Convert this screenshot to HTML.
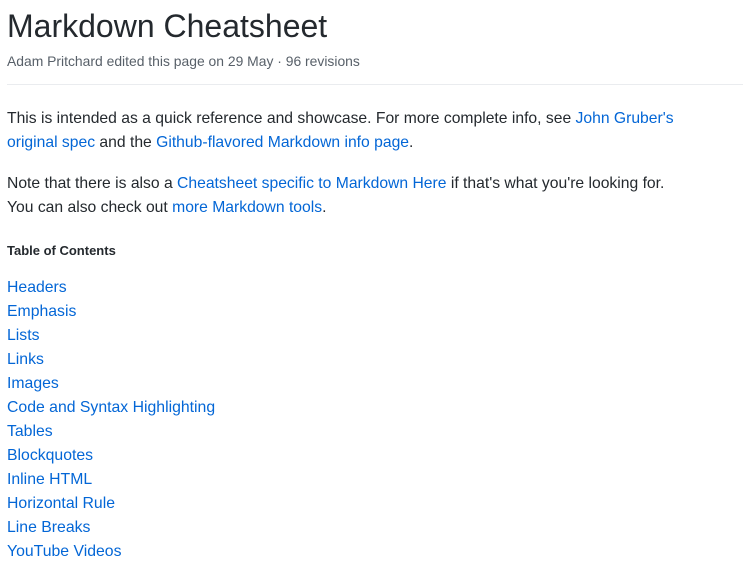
<!DOCTYPE html>
<html><head><meta charset="utf-8"><style>
body{margin:0;background:#fff;font-family:"Liberation Sans",sans-serif;color:#24292e;width:743px;height:567px;overflow:hidden}
.w{position:absolute;left:7px;top:0;width:736px}
h1{font-weight:400;font-size:32px;margin:0;position:absolute;top:8px;left:0;white-space:nowrap}
.sub{position:absolute;top:53px;left:0;font-size:13.9px;color:#586069}
.hr{position:absolute;top:84px;left:0;right:0;height:1px;background:#eaecef}
p{position:absolute;left:0;margin:0;font-size:15.7px;line-height:24px;white-space:nowrap}
a{color:#0366d6;text-decoration:none}
.toc{position:absolute;left:0;top:243px;font-size:13px;font-weight:bold}
ul{position:absolute;left:0;top:276px;margin:0;padding:0;list-style:none;font-size:15.8px;line-height:24px}
</style></head><body><div class="w">
<h1>Markdown Cheatsheet</h1>
<div class="sub">Adam Pritchard edited this page on 29 May · 96 revisions</div>
<div class="hr"></div>
<p style="top:107px">This is intended as a quick reference and showcase. For more complete info, see <a>John Gruber's</a><br><a>original spec</a> and the <a>Github-flavored Markdown info page</a>.</p>
<p style="top:172px">Note that there is also a <a>Cheatsheet specific to Markdown Here</a> if that's what you're looking for.<br>You can also check out <a>more Markdown tools</a>.</p>
<div class="toc">Table of Contents</div>
<ul><li><a>Headers</a></li><li><a>Emphasis</a></li><li><a>Lists</a></li><li><a>Links</a></li><li><a>Images</a></li><li><a>Code and Syntax Highlighting</a></li><li><a>Tables</a></li><li><a>Blockquotes</a></li><li><a>Inline HTML</a></li><li><a>Horizontal Rule</a></li><li><a>Line Breaks</a></li><li><a>YouTube Videos</a></li></ul>
</div></body></html>
